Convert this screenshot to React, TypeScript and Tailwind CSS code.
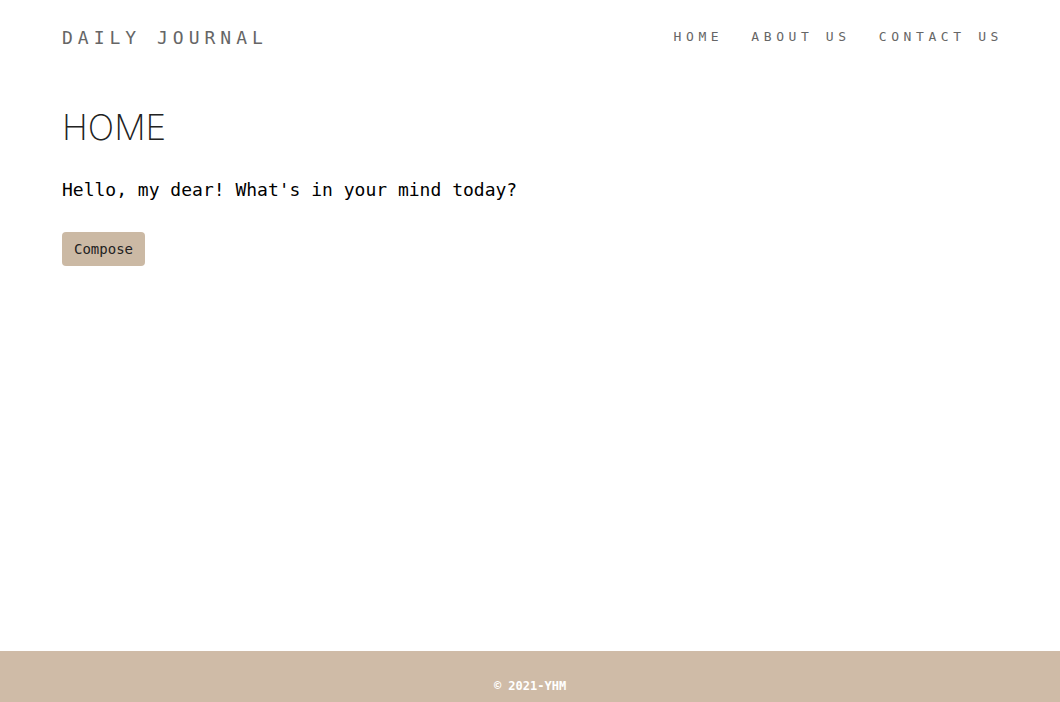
const mono = { fontFamily: '"DejaVu Sans Mono", "Liberation Mono", monospace' };

const NavLink = ({ label }: { label: string }) => (
  <a href="#" className="pl-[28px] text-[13px] tracking-[4.6px] text-[#666] no-underline">
    {label}
  </a>
);

const App = () => {
  return (
    <div className="flex min-h-screen flex-col bg-white" style={mono}>
      <header className="mx-auto w-[960px] px-3">
        <div className="flex h-[75px] items-center justify-between">
          <a href="#" className="text-[18px] tracking-[5px] text-[#666]">
            DAILY JOURNAL
          </a>
          <nav className="-mr-[5px] -mt-[1px] flex items-center">
            <NavLink label="HOME" />
            <NavLink label="ABOUT US" />
            <NavLink label="CONTACT US" />
          </nav>
        </div>
      </header>

      <main className="mx-auto w-[960px] flex-1 px-3">
        <h1
          className="mt-[28px] text-[35px] font-extralight leading-[48px] text-[#222]"
          style={{ fontFamily: 'Inter, "Noto Sans", sans-serif' }}
        >
          HOME
        </h1>
        <p className="mt-[25px] text-[18px] leading-[27px] text-black">
          Hello, my dear! What's in your mind today?
        </p>
        <button className="mt-[29px] h-[34px] rounded-[4px] bg-[#cbb9a4] px-3 text-[14px] text-[#222]">
          Compose
        </button>
      </main>

      <footer className="h-[51px] bg-[#cfbba7] pt-[26px] text-center text-[12px] font-semibold text-white">
        © 2021-YHM
      </footer>
    </div>
  );
};

export default App;
